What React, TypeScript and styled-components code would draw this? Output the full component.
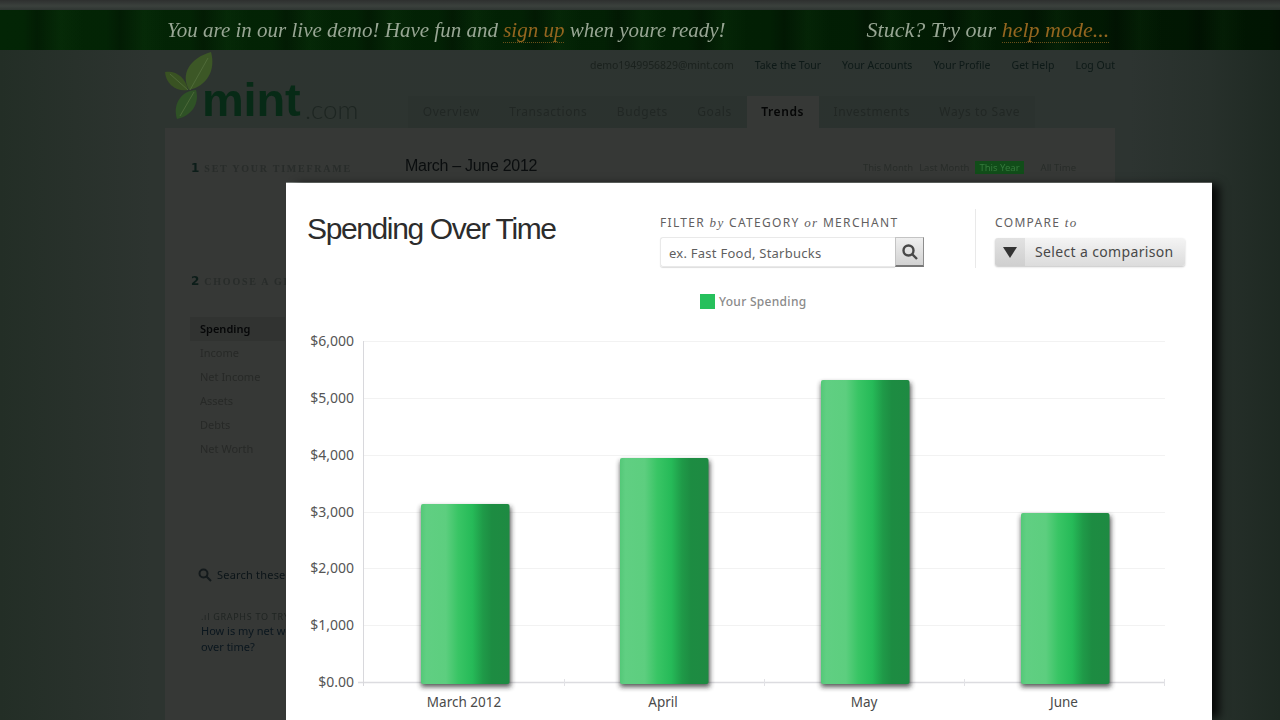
import React from "react";
import styled, { createGlobalStyle, css } from "styled-components";

const Global = createGlobalStyle`
  html, body { margin: 0; padding: 0; background: #263028; }
  * { box-sizing: border-box; }
`;

const ui = `"Noto Sans", "Open Sans", sans-serif`;

const Page = styled.div`
  position: relative;
  width: 1280px;
  height: 720px;
  overflow: hidden;
  background: linear-gradient(90deg, #232e26 0, #2d3430 150px, #2d3431 1130px, #27302b 1210px, #1e2922 1280px);
`;

const Backdrop = styled.div`
  display: flex;
  flex-direction: column;
  height: 720px;
  filter: blur(0.6px);
`;

const TopStrip = styled.div`
  height: 10px;
  flex: none;
  background: linear-gradient(180deg, #2e302f, #3b413d 60%, #2e3531);
`;

const Banner = styled.div`
  height: 40px;
  flex: none;
  display: flex;
  align-items: center;
  padding-left: 167px;
  color: #98a694;
  background:
    repeating-linear-gradient(90deg, rgba(0,0,0,0) 0, rgba(0,0,0,0) 23px, rgba(0,0,0,.22) 37px, rgba(30,90,30,.1) 61px, rgba(0,0,0,0) 83px),
    linear-gradient(90deg, #032505, #021f04 60%, #011502);
`;

const BannerText = styled.span<{ $gap?: number }>`
  font-family: "Liberation Serif", serif;
  font-style: italic;
  font-size: 21px;
  white-space: nowrap;
  margin-left: ${(p) => p.$gap ?? 0}px;
`;

const BannerHelp = styled(BannerText)`
  font-size: 22px;
`;

const Hot = styled.span`
  color: #94661f;
  border-bottom: 1px dotted #6a5019;
`;

const Main = styled.div`
  width: 950px;
  margin-left: 165px;
  flex: 1;
  display: flex;
  flex-direction: column;
`;

const Header = styled.div`
  height: 78px;
  flex: none;
  display: flex;
`;

const Logo = styled.div`
  position: relative;
  width: 245px;
  flex: none;
`;

const LeafSvg = styled.svg`
  position: absolute;
  left: 0;
  top: 0;
`;

const LogoWord = styled.span`
  position: absolute;
  left: 37px;
  top: 20px;
  font-family: "Liberation Sans", sans-serif;
  font-weight: 700;
  font-size: 47px;
  line-height: 60px;
  letter-spacing: -0.2px;
  color: #072a16;
`;

const LogoCom = styled.span`
  position: absolute;
  left: 140px;
  top: 42px;
  font-family: "Lato", sans-serif;
  font-weight: 300;
  font-size: 26px;
  line-height: 34px;
  color: #1d2521;
`;

const HeadRight = styled.div`
  flex: 1;
  display: flex;
  flex-direction: column;
  padding-top: 8px;
`;

const UserNav = styled.div`
  display: flex;
  justify-content: flex-end;
  align-items: center;
  height: 14px;
  gap: 21px;
  font: 10.5px/14px ${ui};
  color: #0d1917;
`;

const Email = styled.span`
  color: #1a211d;
  letter-spacing: -0.05px;
`;

const Tabs = styled.div`
  display: flex;
  margin-top: 24px;
  margin-left: -2px;
  height: 32px;
`;

const Tab = styled.div<{ $on?: boolean }>`
  padding: 0 14.7px;
  font: 12px/32px ${ui};
  letter-spacing: 0.6px;
  color: #212724;
  background: rgba(0, 0, 0, 0.03);
  ${(p) =>
    p.$on &&
    css`
      background: #363836;
      color: #050606;
      font-weight: 600;
    `}
`;

const Content = styled.div`
  flex: 1;
  background: #363836;
  display: flex;
  flex-direction: column;
  padding: 26px 26px 0;
`;

const TimeRow = styled.div`
  display: flex;
  align-items: center;
  height: 24px;
`;

const Step = styled.span`
  font: 700 12px "DejaVu Sans", sans-serif;
  color: #0c1d19;
  margin-right: 5px;
`;

const StepLabel = styled.span`
  font: 700 10px "Liberation Serif", serif;
  letter-spacing: 1.75px;
  color: #282c2a;
  white-space: nowrap;
`;

const Step1 = styled.div`
  width: 214px;
  flex: none;
  white-space: nowrap;
  padding-top: 2px;
`;

const Period = styled.div`
  font: 16px "Liberation Sans", sans-serif;
  letter-spacing: -0.28px;
  color: #0a0d0e;
  flex: 1;
`;

const Ranges = styled.div`
  display: flex;
  align-items: center;
  gap: 6px;
  margin-right: 13px;
  padding-top: 2px;
  font: 9.5px/13px ${ui};
  color: #282c29;
`;

const RangeOn = styled.span`
  background: #114d19;
  color: #357a3c;
  padding: 0 4px;
  margin-right: 11px;
`;

const Step2 = styled.div`
  margin-top: 93px;
  height: 20px;
  white-space: nowrap;
`;

const Metrics = styled.div`
  margin-top: 26px;
  width: 95px;
  margin-left: -1px;
  display: flex;
  flex-direction: column;
`;

const Metric = styled.div<{ $on?: boolean }>`
  height: 24px;
  padding-left: 10px;
  font: 11px/24px ${ui};
  white-space: nowrap;
  color: #272927;
  ${(p) =>
    p.$on &&
    css`
      color: #060708;
      font-weight: 600;
      background: #313331;
    `}
`;

const SearchRow = styled.div`
  margin-top: 104px;
  display: flex;
  align-items: center;
  gap: 5px;
  height: 20px;
  padding-left: 7px;
  font: 11px/20px ${ui};
  letter-spacing: 0.2px;
  color: #0b1418;
  white-space: nowrap;
`;

const Graphs = styled.div`
  margin-top: 26px;
  padding-left: 10px;
  width: 95px;
  white-space: nowrap;
`;

const GraphsHead = styled.div`
  font: 9px/12px ${ui};
  letter-spacing: 0.7px;
  color: #1f2422;
`;

const GraphsLink = styled.div`
  font: 11px/16px ${ui};
  color: #0a161e;
`;

const Modal = styled.div`
  position: absolute;
  left: 286px;
  top: 183px;
  width: 926px;
  height: 537px;
  background: #fff;
  display: flex;
  flex-direction: column;
  box-shadow: 9px 0 9px -2px rgba(0, 0, 0, 0.85), 0 -1px 0 #777c79;
`;

const ModalHead = styled.div`
  height: 95px;
  flex: none;
  display: flex;
  padding: 29px 0 0 21px;
`;

const Title = styled.h1`
  margin: 0;
  width: 353px;
  flex: none;
  font: 400 30px/34px "Liberation Sans", sans-serif;
  letter-spacing: -1.38px;
  color: #2c2c2c;
  white-space: nowrap;
`;

const Field = styled.div`
  margin-top: 3px;
  display: flex;
  flex-direction: column;
`;

const FieldLabel = styled.div`
  font: 12px/16px ${ui};
  letter-spacing: 1.33px;
  color: #62605f;
  white-space: nowrap;
  em {
    font-family: "Liberation Serif", serif;
    font-size: 13px;
  }
`;

const FilterBox = styled.div`
  margin-top: 6px;
  width: 264px;
  height: 30px;
  display: flex;
`;

const FilterInput = styled.div`
  flex: 1;
  border: 1px solid #e9e9e9;
  border-right: 0;
  border-radius: 3px 0 0 3px;
  box-shadow: 0 1px 1px #ddd;
  padding-left: 8px;
  font: 13px/30px ${ui};
  letter-spacing: 0.25px;
  color: #5f5f5f;
`;

const FilterBtn = styled.div`
  width: 29px;
  flex: none;
  display: flex;
  align-items: center;
  justify-content: center;
  background: linear-gradient(180deg, #efefef, #d2d2d2);
  border: 1px solid #c4c4c4;
  border-bottom: 2px solid #777;
  border-right: 1px solid #8d8d8d;
  color: #454545;
`;

const Rule = styled.div`
  width: 1px;
  height: 59px;
  margin: -3px 19px 0 51px;
  background: #e9e9e9;
`;

const Compare = styled.div`
  margin-top: 7px;
  width: 190px;
  height: 28px;
  display: flex;
  align-items: center;
  border-radius: 3px;
  background: linear-gradient(180deg, #f4f4f4, #dcdcdc);
  box-shadow: 0 1px 2px #c4c4c4;
  font: 14px/28px ${ui};
  letter-spacing: 0.35px;
  color: #484848;
`;

const CompareArrow = styled.div`
  width: 30px;
  height: 28px;
  flex: none;
  display: flex;
  align-items: center;
  justify-content: center;
  margin-right: 10px;
  background: linear-gradient(180deg, #e2e2e2, #cfcfcf);
  border-radius: 3px 0 0 3px;
`;

const Legend = styled.div`
  height: 52px;
  flex: none;
  display: flex;
  align-items: flex-start;
  padding: 16px 0 0 414px;
  gap: 4px;
  font: 500 12px/15px ${ui};
  letter-spacing: 0.3px;
  color: #8a8a8a;
`;

const Swatch = styled.span`
  width: 15px;
  height: 15px;
  background: #26c05c;
`;

const ChartSvg = styled.svg`
  display: block;
  flex: none;
`;

const AxisLabel = styled.text`
  font: 14px ${ui};
  fill: #555;
`;

const CatLabel = styled.text`
  font: 13.5px ${ui};
  fill: #4a4a4a;
`;

const ticks = [
  { l: "$6,000", y: 341 },
  { l: "$5,000", y: 398 },
  { l: "$4,000", y: 455 },
  { l: "$3,000", y: 512 },
  { l: "$2,000", y: 568 },
  { l: "$1,000", y: 625 },
  { l: "$0.00", y: 682 },
];

const bars = [
  { l: "March 2012", x: 421, top: 504, c: 464 },
  { l: "April", x: 620, top: 458, c: 663 },
  { l: "May", x: 821, top: 380, c: 864 },
  { l: "June", x: 1021, top: 513, c: 1064 },
];

function Chart() {
  return (
    <ChartSvg width={926} height={390} viewBox="286 330 926 390">
      <defs>
        <linearGradient id="bar" x1="0" x2="1" y1="0" y2="0">
          <stop offset="0" stopColor="#54c878" />
          <stop offset="0.06" stopColor="#60cf82" />
          <stop offset="0.28" stopColor="#5dce7f" />
          <stop offset="0.42" stopColor="#39c565" />
          <stop offset="0.58" stopColor="#26ba58" />
          <stop offset="0.7" stopColor="#1f9a48" />
          <stop offset="0.8" stopColor="#1d8c42" />
          <stop offset="1" stopColor="#1e8a42" />
        </linearGradient>
        <filter id="sh" x="-20%" y="-10%" width="140%" height="120%">
          <feGaussianBlur stdDeviation="2.8" />
        </filter>
      </defs>
      {ticks.map((t) => (
        <g key={t.l}>
          <line
            x1={t.y === 682 ? 358 : 364}
            x2={1165}
            y1={t.y + 0.5}
            y2={t.y + 0.5}
            stroke={t.y === 682 ? "#dcdce0" : "#f2f2f2"}
            strokeWidth={t.y === 682 ? 1.5 : 1}
          />
          <AxisLabel x={354} y={t.y + 5} textAnchor="end">
            {t.l}
          </AxisLabel>
        </g>
      ))}
      <line x1={363.5} x2={363.5} y1={341} y2={686} stroke="#d8d8dc" />
      {[564, 764, 964, 1164].map((x) => (
        <line key={x} x1={x + 0.5} x2={x + 0.5} y1={679} y2={686} stroke="#e2e2e6" />
      ))}
      {bars.map((b) => (
        <g key={b.l}>
          <rect x={b.x} y={b.top + 3} width={90} height={684 - b.top} fill="#222" opacity={0.75} filter="url(#sh)" />
          <rect x={b.x} y={b.top} width={88.5} height={684 - b.top} rx={2} fill="url(#bar)" />
          <CatLabel x={b.c} y={707} textAnchor="middle">
            {b.l}
          </CatLabel>
        </g>
      ))}
    </ChartSvg>
  );
}

export default function App() {
  return (
    <Page>
      <Global />
      <Backdrop>
        <TopStrip />
        <Banner>
          <BannerText>
            You are in our live demo! Have fun and <Hot>sign up</Hot> when youre ready!
          </BannerText>
          <BannerHelp $gap={141}>
            Stuck? Try our <Hot>help mode...</Hot>
          </BannerHelp>
        </Banner>
        <Main>
          <Header>
            <Logo>
              <LeafSvg width={60} height={78} viewBox="165 50 60 78">
                <path d="M189 90 C180 74 190 58 211 52 C216 70 207 86 189 90Z" fill="#3c5726" />
                <path d="M188 90 C176 92 166 84 165 72 C176 70 186 78 188 90Z" fill="#395222" />
                <path d="M196 90 C182 90 172 104 177 119 C191 116 200 104 196 90Z" fill="#2f5226" />
                <path d="M190 90 L208 58 M188 90 L170 74 M194 92 L180 116" stroke="#587340" strokeWidth="0.7" fill="none" />
              </LeafSvg>
              <LogoWord>mint</LogoWord>
              <LogoCom>.com</LogoCom>
            </Logo>
            <HeadRight>
              <UserNav>
                <Email>demo1949956829@mint.com</Email>
                <span>Take the Tour</span>
                <span>Your Accounts</span>
                <span>Your Profile</span>
                <span>Get Help</span>
                <span>Log Out</span>
              </UserNav>
              <Tabs>
                <Tab>Overview</Tab>
                <Tab>Transactions</Tab>
                <Tab>Budgets</Tab>
                <Tab>Goals</Tab>
                <Tab $on>Trends</Tab>
                <Tab>Investments</Tab>
                <Tab>Ways to Save</Tab>
              </Tabs>
            </HeadRight>
          </Header>
          <Content>
            <TimeRow>
              <Step1>
                <Step>1</Step>
                <StepLabel>SET YOUR TIMEFRAME</StepLabel>
              </Step1>
              <Period>March – June 2012</Period>
              <Ranges>
                <span>This Month</span>
                <span>Last Month</span>
                <RangeOn>This Year</RangeOn>
                <span>All Time</span>
              </Ranges>
            </TimeRow>
            <Step2>
              <Step>2</Step>
              <StepLabel>CHOOSE A GRAPH</StepLabel>
            </Step2>
            <Metrics>
              <Metric $on>Spending</Metric>
              <Metric>Income</Metric>
              <Metric>Net Income</Metric>
              <Metric>Assets</Metric>
              <Metric>Debts</Metric>
              <Metric>Net Worth</Metric>
            </Metrics>
            <SearchRow>
              <svg width={14} height={14} viewBox="0 0 14 14" fill="none" stroke="#141a1c" strokeWidth="2">
                <circle cx="5.5" cy="5.5" r="4" />
                <path d="M8.5 8.5 L13 13" />
              </svg>
              Search these
            </SearchRow>
            <Graphs>
              <GraphsHead>.ıl GRAPHS TO TRY</GraphsHead>
              <GraphsLink>
                How is my net worth
                <br />
                over time?
              </GraphsLink>
            </Graphs>
          </Content>
        </Main>
      </Backdrop>
      <Modal>
        <ModalHead>
          <Title>Spending Over Time</Title>
          <Field>
            <FieldLabel>
              FILTER <em>by</em> CATEGORY <em>or</em> MERCHANT
            </FieldLabel>
            <FilterBox>
              <FilterInput>ex. Fast Food, Starbucks</FilterInput>
              <FilterBtn>
                <svg width={18} height={18} viewBox="0 0 18 18" fill="none" stroke="#484848" strokeWidth="2.4">
                  <circle cx="7.5" cy="7.5" r="5" />
                  <path d="M11.5 11.5 L16 16" />
                </svg>
              </FilterBtn>
            </FilterBox>
          </Field>
          <Rule />
          <Field>
            <FieldLabel>
              COMPARE <em>to</em>
            </FieldLabel>
            <Compare>
              <CompareArrow>
                <svg width={14} height={11} viewBox="0 0 14 11">
                  <path d="M0 0 H14 L7 11Z" fill="#333" />
                </svg>
              </CompareArrow>
              Select a comparison
            </Compare>
          </Field>
        </ModalHead>
        <Legend>
          <Swatch />
          Your Spending
        </Legend>
        <Chart />
      </Modal>
    </Page>
  );
}
